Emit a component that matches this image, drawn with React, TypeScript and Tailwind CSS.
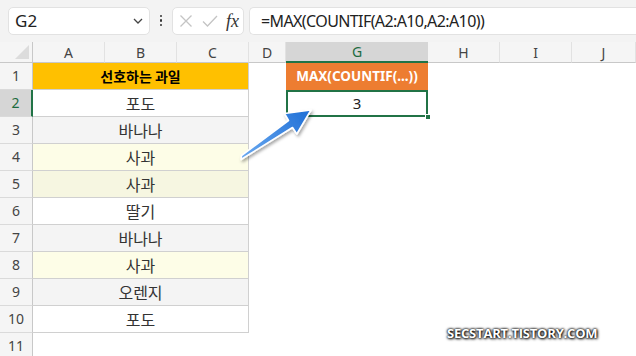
import React from 'react';

const rows = [
  { n: 2, text: '포도', bg: 'bg-white' },
  { n: 3, text: '바나나', bg: 'bg-[#f4f4f4]' },
  { n: 4, text: '사과', bg: 'bg-[#fdfde7]' },
  { n: 5, text: '사과', bg: 'bg-[#f6f6e1]' },
  { n: 6, text: '딸기', bg: 'bg-white' },
  { n: 7, text: '바나나', bg: 'bg-[#f4f4f4]' },
  { n: 8, text: '사과', bg: 'bg-[#fdfde7]' },
  { n: 9, text: '오렌지', bg: 'bg-[#f4f4f4]' },
  { n: 10, text: '포도', bg: 'bg-white' },
];

const cols = ['A', 'B', 'C', 'D', 'G', 'H', 'I', 'J'];

const ui = "font-['Noto_Sans','Open_Sans',sans-serif]";
const kr = "font-['Noto_Sans_CJK_KR','Noto_Sans',sans-serif]";

const RowHead: React.FC<{ n: number; active?: boolean }> = ({ n, active }) => (
  <div
    className={`flex items-end justify-center pb-[3px] text-[14px] border-b border-[#dadada] ${ui} ${
      active
        ? 'bg-[#d6d6d6] text-[#1d6b3f] border-r-2 border-r-[#217346]'
        : 'bg-[#f5f5f5] text-[#444] border-r border-r-[#c8c8c8]'
    }`}
  >
    {n}
  </div>
);

// blue callout arrow pointing at G2
const Arrow: React.FC = () => (
  <svg className="absolute left-0 top-0 pointer-events-none" width="636" height="356">
    <defs>
      <linearGradient id="ag" x1="242" y1="158" x2="310" y2="110" gradientUnits="userSpaceOnUse">
        <stop offset="0" stopColor="#6aa9f0" />
        <stop offset="1" stopColor="#1f6fd6" />
      </linearGradient>
      <filter id="sh" x="-20%" y="-20%" width="140%" height="140%">
        <feDropShadow dx="1.5" dy="2" stdDeviation="1.5" floodColor="#000" floodOpacity="0.35" />
      </filter>
    </defs>
    <polygon
      points="241,159.5 292.5,127.5 296.8,134 311,110 284.5,113.5 288.5,120.5 241.5,155.5"
      fill="url(#ag)"
      stroke="#fff"
      strokeWidth="1.6"
      strokeLinejoin="round"
      filter="url(#sh)"
    />
  </svg>
);

export default function App() {
  return (
    <div className="relative w-[636px] h-[356px] overflow-hidden bg-white">
      {/* formula bar */}
      <div className="flex items-center h-[42px] bg-[#f3f3f3] pl-[8px] pb-[1px]">
        <div className="flex items-center justify-between w-[142px] h-[28px] bg-white border border-[#e2e2e2] rounded-[5px] pl-[6px] pr-[6px]">
          <span className={`text-[17px] text-[#222] ${ui}`}>G2</span>
          <svg width="10" height="6" viewBox="0 0 10 6">
            <path d="M1 1l4 4 4-4" fill="none" stroke="#444" strokeWidth="1.3" />
          </svg>
        </div>
        <div className="flex flex-col items-center justify-center gap-[2px] w-[22px]">
          <span className="w-[2.5px] h-[2.5px] bg-[#333] rounded-full" />
          <span className="w-[2.5px] h-[2.5px] bg-[#333] rounded-full" />
          <span className="w-[2.5px] h-[2.5px] bg-[#333] rounded-full" />
        </div>
        <div className="flex items-center w-[72px] h-[28px] bg-white border border-[#e2e2e2] rounded-[5px] pl-[6px]">
          <svg width="14" height="14" viewBox="0 0 14 14">
            <path d="M1.5 1.5l11 11M12.5 1.5l-11 11" stroke="#c4c4c4" strokeWidth="1.3" />
          </svg>
          <svg width="16" height="14" viewBox="0 0 16 14" className="ml-[9px]">
            <path d="M1 7.5l4.5 4.5L15 2" fill="none" stroke="#c4c4c4" strokeWidth="1.3" />
          </svg>
          <span className="ml-[8px] text-[18px] italic text-[#333] font-['Liberation_Serif',serif] leading-none">fx</span>
        </div>
        <div className="flex items-center flex-1 h-[28px] bg-white border border-[#e2e2e2] border-r-0 rounded-l-[5px] ml-[5px] pl-[11px]">
          <span className={`text-[16px] tracking-[-0.6px] text-[#222] ${ui}`}>=MAX(COUNTIF(A2:A10,A2:A10))</span>
        </div>
      </div>

      {/* sheet */}
      <div className="grid grid-cols-[33px_72px_72px_72px_37px_142px_72px_72px_1fr] grid-rows-[21px_repeat(11,27px)]">
        <div className="relative bg-[#f5f5f5] border-r border-b border-[#c8c8c8]">
          <div className="absolute right-[3px] bottom-[3px] w-0 h-0 border-l-[14px] border-l-transparent border-b-[14px] border-b-[#dcdcdc]" />
        </div>
        {cols.map((c) => (
          <div
            key={c}
            className={`flex items-center justify-center text-[14px] ${ui} ${
              c === 'G'
                ? 'bg-[#d6d6d6] text-[#1d6b3f] border-b-2 border-b-[#217346]'
                : 'bg-[#f5f5f5] text-[#444] border-b border-b-[#c8c8c8] border-r border-r-[#e2e2e2]'
            }`}
          >
            {c}
          </div>
        ))}

        <RowHead n={1} />
        <div className={`col-span-3 flex items-center justify-center bg-[#ffc000] border-b border-r border-[#d0d0d0] text-[14px] font-bold text-black ${kr}`}>
          선호하는 과일
        </div>
        <div />
        <div className={`flex items-center justify-center bg-[#ed7d31] text-white font-bold text-[13.5px] ${ui}`}>
          MAX(COUNTIF(...))
        </div>
        <div />
        <div />
        <div />

        {rows.map((r) => (
          <React.Fragment key={r.n}>
            <RowHead n={r.n} active={r.n === 2} />
            <div className={`col-span-3 flex items-center justify-center border-b border-r border-[#d0d0d0] text-[16px] text-[#333] ${kr} ${r.bg}`}>
              {r.text}
            </div>
            <div />
            {r.n === 2 ? (
              <div className={`relative flex items-center justify-center border-2 border-[#217346] text-[15px] text-[#222] ${ui}`}>
                3
                <span className="absolute right-[-5px] bottom-[-5px] w-[6px] h-[6px] bg-[#217346] border border-white" />
              </div>
            ) : (
              <div />
            )}
            <div />
            <div />
            <div />
          </React.Fragment>
        ))}

        <RowHead n={11} />
        <div className="col-span-8" />
      </div>

      <Arrow />

      <div className="absolute left-[447px] top-[324px] text-[13px] font-bold text-white font-['Open_Sans',sans-serif] tracking-[-0.2px] [text-shadow:0_0_3px_#000,0_0_2px_#000,1px_1px_3px_#222]">
        SECSTART.TISTORY.COM
      </div>
    </div>
  );
}
